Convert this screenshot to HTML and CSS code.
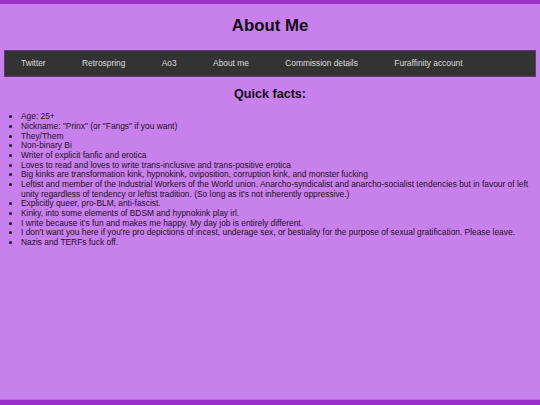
FILE: index.html
```html
<!DOCTYPE html>
<html lang="en">
<head>
<meta charset="utf-8">
<title>About Me</title>
<link rel="stylesheet" href="styles.css">
</head>
<body>
<div class="page">
  <header class="header">
    <h1 class="title">About Me</h1>
    <nav class="nav">
      <a class="nav-link" href="#">Twitter</a>
      <a class="nav-link" href="#">Retrospring</a>
      <a class="nav-link" href="#">Ao3</a>
      <a class="nav-link" href="#">About me</a>
      <a class="nav-link" href="#">Commission details</a>
      <a class="nav-link" href="#">Furaffinity account</a>
    </nav>
  </header>
  <main class="content">
    <h2 class="subtitle">Quick facts:</h2>
    <ul class="facts">
      <li>Age: 25+</li>
      <li>Nickname: "Prinx" (or "Fangs" if you want)</li>
      <li>They/Them</li>
      <li>Non-binary Bi</li>
      <li>Writer of explicit fanfic and erotica</li>
      <li>Loves to read and loves to write trans-inclusive and trans-positive erotica</li>
      <li>Big kinks are transformation kink, hypnokink, oviposition, corruption kink, and monster fucking</li>
      <li>Leftist and member of the Industrial Workers of the World union. Anarcho-syndicalist and anarcho-socialist tendencies but in favour of left unity regardless of tendency or leftist tradition. (So long as it's not inherently oppressive.)</li>
      <li>Explicitly queer, pro-BLM, anti-fascist.</li>
      <li>Kinky, into some elements of BDSM and hypnokink play irl.</li>
      <li>I write because it's fun and makes me happy. My day job is entirely different.</li>
      <li>I don't want you here if you're pro depictions of incest, underage sex, or bestiality for the purpose of sexual gratification. Please leave.</li>
      <li>Nazis and TERFs fuck off.</li>
    </ul>
  </main>
  <footer class="footer"></footer>
</div>
</body>
</html>
```

FILE: styles.css
```css
html, body {
  margin: 0;
  padding: 0;
  height: 100%;
}

body {
  background: #c880ec;
  font-family: "Liberation Sans", Arial, sans-serif;
  color: #1a1020;
}

.page {
  min-height: 100%;
  box-sizing: border-box;
  display: flex;
  flex-direction: column;
  border-top: 4px solid #9a2fcb;
}

.header {
  padding: 0 4px;
}

.title {
  margin: 12px 0 15px;
  text-align: center;
  font-size: 16.8px;
  font-weight: bold;
  line-height: 19.3px;
  color: #140a18;
}

.nav {
  display: flex;
  gap: 36.4px;
  height: 27px;
  box-sizing: border-box;
  align-items: center;
  padding: 0 0 1px 16px;
  background: #333333;
  border: 1px solid #5c3b70;
}

.nav-link {
  color: #dcdcdc;
  text-decoration: none;
  font-size: 8.4px;
}

.content {
  flex: 1;
  padding: 0 4px;
}

.subtitle {
  margin: 10px 0 10.6px;
  text-align: center;
  font-size: 12.6px;
  line-height: 14.5px;
  font-weight: bold;
  color: #140a18;
}

.facts {
  margin: 0;
  padding-left: 17px;
  font-size: 8.4px;
  line-height: 9.65px;
  color: #1e1224;
}

.footer {
  height: 5px;
  background: #9a2fcb;
  border-top: 1px solid #b865e0;
}
```
